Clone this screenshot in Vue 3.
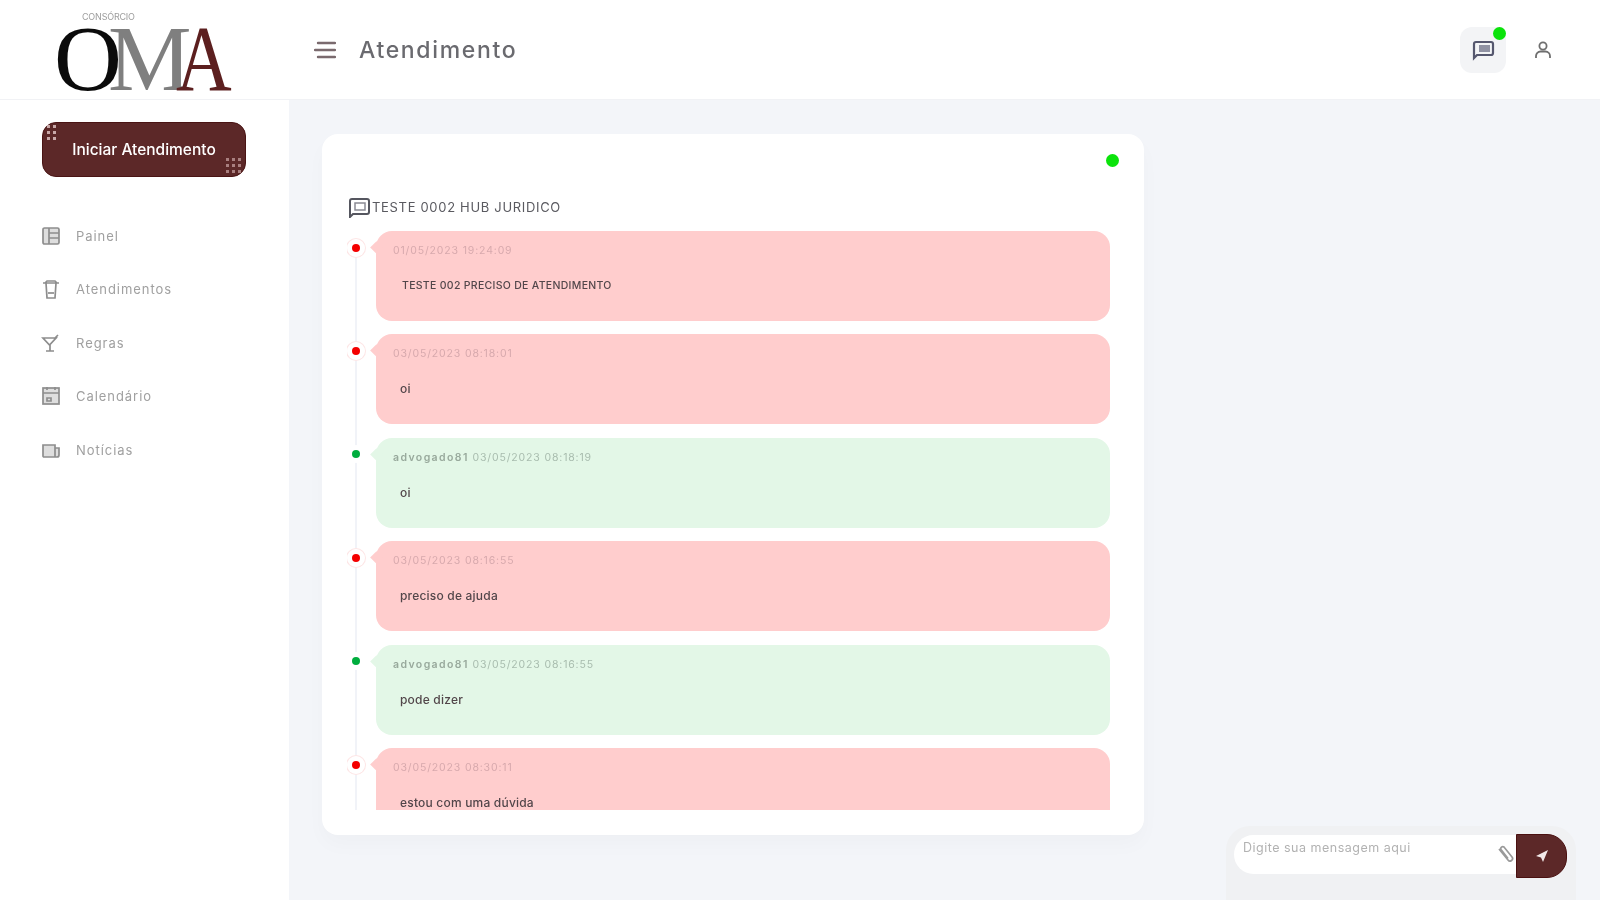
<script setup>
const nav = [
  { label: 'Painel', icon: 'panel' },
  { label: 'Atendimentos', icon: 'cup' },
  { label: 'Regras', icon: 'glass' },
  { label: 'Calendário', icon: 'cal' },
  { label: 'Notícias', icon: 'news' }
]
const messages = [
  { kind: 'in', meta: '01/05/2023 19:24:09', text: 'TESTE 002 PRECISO DE ATENDIMENTO', upper: true },
  { kind: 'in', meta: '03/05/2023 08:18:01', text: 'oi' },
  { kind: 'out', author: 'advogado81', meta: '03/05/2023 08:18:19', text: 'oi' },
  { kind: 'in', meta: '03/05/2023 08:16:55', text: 'preciso de ajuda' },
  { kind: 'out', author: 'advogado81', meta: '03/05/2023 08:16:55', text: 'pode dizer' },
  { kind: 'in', meta: '03/05/2023 08:30:11', text: 'estou com uma dúvida' }
]
</script>

<template>
  <div class="page">
    <header class="topbar">
      <div class="brand">
        <span class="brand-small">CONSÓRCIO</span>
        <span class="brand-mark"><span class="l-o">O</span><span class="l-m">M</span><span class="l-a">A</span></span>
      </div>
      <svg class="burger" width="22" height="20" viewBox="0 0 22 20" fill="none" stroke="#7a6a6e" stroke-width="2.4" stroke-linecap="round">
        <path d="M4 3h17M1 10h20M4 17h17" />
      </svg>
      <h1 class="title">Atendimento</h1>
      <div class="top-actions">
        <div class="chat-btn">
          <svg width="24" height="22" viewBox="0 0 24 22" fill="none">
            <path d="M5 3h15a2 2 0 0 1 2 2v9a2 2 0 0 1-2 2H6l-3 3V5a2 2 0 0 1 2-2z" stroke="#55576e" stroke-width="2.2" />
            <rect x="8" y="6" width="11" height="7" fill="#9092a3" />
          </svg>
          <span class="chat-dot"></span>
        </div>
        <svg class="user" width="20" height="20" viewBox="0 0 20 20" fill="none" stroke="#6f6f6f" stroke-width="1.8">
          <circle cx="10" cy="6" r="3.6" />
          <path d="M3 18v-2a4.5 4.5 0 0 1 4.5-4.5h5A4.5 4.5 0 0 1 17 16v2" />
        </svg>
      </div>
    </header>

    <div class="body">
      <aside class="sidebar">
        <button class="start" type="button">
          <svg class="dots dots-a" width="12" height="18" viewBox="0 0 12 18" fill="#c9a9a9">
            <rect x="0" y="1" width="3" height="3" /><rect x="6" y="1" width="3" height="3" />
            <rect x="0" y="7" width="3" height="3" /><rect x="6" y="7" width="3" height="3" />
            <rect x="0" y="13" width="3" height="3" /><rect x="6" y="13" width="3" height="3" />
          </svg>
          <span>Iniciar Atendimento</span>
          <svg class="dots dots-b" width="18" height="18" viewBox="0 0 18 18" fill="#a98080">
            <rect x="0" y="1" width="3" height="3" /><rect x="6" y="1" width="3" height="3" /><rect x="12" y="1" width="3" height="3" />
            <rect x="0" y="7" width="3" height="3" /><rect x="6" y="7" width="3" height="3" /><rect x="12" y="7" width="3" height="3" />
            <rect x="0" y="13" width="3" height="3" /><rect x="6" y="13" width="3" height="3" /><rect x="12" y="13" width="3" height="3" />
          </svg>
        </button>
        <nav class="nav">
          <a v-for="item in nav" :key="item.label" class="nav-item">
            <svg width="20" height="20" viewBox="0 0 20 20" fill="none" stroke="#8d8d8d" stroke-width="1.7">
              <template v-if="item.icon === 'panel'">
                <rect x="2" y="2" width="16" height="16" rx="1.5" fill="#dedede" />
                <path d="M8 2v16M8 7h10M8 12h10" />
              </template>
              <template v-else-if="item.icon === 'cup'">
                <path d="M2 4h16M4 4l2-2h8l2 2M5 4l1 15h8l1-15" />
                <path d="M7 14h6" />
              </template>
              <template v-else-if="item.icon === 'glass'">
                <path d="M2 5h13l-6.500 7zM9 12v6M5 18h8M13 6l4-4" />
              </template>
              <template v-else-if="item.icon === 'cal'">
                <rect x="2" y="2" width="16" height="16" fill="#dedede" />
                <path d="M2 7h16M6 1v3M14 1v3M6 12h4v3H6z" />
              </template>
              <template v-else>
                <path d="M2 5h12v12H3a1 1 0 0 1-1-1zM14 8h4v7a2 2 0 0 1-2 2h-2" fill="#dedede" />
              </template>
            </svg>
            <span>{{ item.label }}</span>
          </a>
        </nav>
      </aside>

      <main class="main">
        <section class="card">
          <div class="status"><span class="status-dot"></span></div>
          <div class="chat-title">
            <svg width="24" height="22" viewBox="0 0 24 22" fill="none">
              <path d="M5 3h15a2 2 0 0 1 2 2v11a2 2 0 0 1-2 2H6l-3 3V5a2 2 0 0 1 2-2z" stroke="#55565f" stroke-width="2" />
              <rect x="8" y="7" width="10" height="7" stroke="#8a8b94" stroke-width="1.500" />
            </svg>
            <span>TESTE 0002 HUB JURIDICO</span>
          </div>
          <div class="timeline">
            <article v-for="(m, i) in messages" :key="i" class="row" :class="m.kind">
              <span class="marker"><span class="marker-core"></span></span>
              <div class="bubble">
                <div class="meta"><b v-if="m.author">{{ m.author }}</b> {{ m.meta }}</div>
                <p class="text" :class="{ upper: m.upper }">{{ m.text }}</p>
              </div>
            </article>
          </div>
        </section>
      </main>
    </div>

    <div class="composer">
      <div class="field">
        <span class="placeholder">Digite sua mensagem aqui</span>
        <svg class="clip" width="18" height="20" viewBox="0 0 18 20" fill="none" stroke="#9a9a9a" stroke-width="1.700">
          <path d="M3 5l9 11a2.500 2.500 0 0 0 4-3L8 3a2 2 0 0 0-3 2.500l7 9" />
        </svg>
      </div>
      <button class="send" type="button" aria-label="Enviar">
        <svg width="14" height="14" viewBox="0 0 14 14" fill="#f2e9e9"><path d="M13 1L1 7l5 1.500L8 13z" /></svg>
      </button>
    </div>
  </div>
</template>

<style>
html, body { margin: 0; background: #f3f5f9; overflow: hidden; }
</style>

<style scoped>
.page {
  position: relative;
  width: 1600px;
  height: 900px;
  overflow: hidden;
  display: flex;
  flex-direction: column;
  background: #f3f5f9;
  font-family: Inter, "Noto Sans", sans-serif;
  filter: blur(0.75px);
}
.topbar {
  height: 100px;
  flex: none;
  display: flex;
  align-items: center;
  background: #fff;
  border-bottom: 1px solid #f1f2f5;
  box-sizing: border-box;
}
.brand {
  width: 314px;
  flex: none;
  height: 99px;
  display: flex;
  flex-direction: column;
  padding: 10px 0 0 54px;
  box-sizing: border-box;
}
.brand-small {
  font-size: 9px;
  line-height: 13px;
  color: #9c9c9c;
  margin-left: 28px;
  letter-spacing: -0.2px;
}
.brand-mark {
  display: block;
  font-family: "Liberation Serif", serif;
  font-size: 94px;
  line-height: 70px;
  height: 70px;
  white-space: nowrap;
}
.l-o { color: #0b0b0b; }
.l-m { color: #7f7f7f; margin-left: -14px; }
.l-a { color: #5c1f1f; margin-left: -15px; display: inline-block; transform: scaleX(0.82); transform-origin: left; }
.burger { flex: none; }
.title {
  margin: 0 0 0 23px;
  font-size: 23px;
  font-weight: 500;
  color: #6a6a6f;
  letter-spacing: 1.65px;
}
.top-actions {
  margin-left: auto;
  display: flex;
  align-items: center;
  gap: 27px;
  padding-right: 47px;
}
.chat-btn {
  position: relative;
  width: 46px;
  height: 46px;
  border-radius: 12px;
  background: #f3f4f6;
  display: flex;
  align-items: center;
  justify-content: center;
}
.chat-dot {
  position: absolute;
  top: 0;
  right: 0;
  width: 13px;
  height: 13px;
  border-radius: 50%;
  background: #0be30b;
}
.body { flex: 1; display: flex; min-height: 0; }
.sidebar {
  width: 289px;
  flex: none;
  background: #fff;
  padding: 22px 42px 0;
  box-sizing: border-box;
}
.start {
  position: relative;
  width: 204px;
  height: 55px;
  padding: 0;
  border: 1px solid #4a1414;
  border-radius: 14px;
  background: #5c2828;
  color: #fff;
  font: 500 15.500px Inter, "Noto Sans", sans-serif;
  letter-spacing: 0;
}
.dots { position: absolute; }
.dots-a { top: 1px; left: 4px; }
.dots-b { bottom: 1px; right: 1px; }
.nav { display: flex; flex-direction: column; gap: 33.4px; margin-top: 49px; }
.nav-item {
  display: flex;
  align-items: center;
  gap: 15px;
  height: 20px;
  margin-left: -1px;
  color: #a0a0a0;
  font-size: 13px;
  letter-spacing: 0.95px;
}
.main { flex: 1; padding: 34px 0 0 33px; }
.card {
  width: 822px;
  height: 701px;
  box-sizing: border-box;
  padding: 20px 34px 25px 25px;
  background: #fff;
  border-radius: 16px;
  box-shadow: 0 10px 20px rgba(20, 30, 60, 0.025);
  display: flex;
  flex-direction: column;
}
.status { display: flex; justify-content: flex-end; height: 14px; }
.status-dot { width: 13px; height: 13px; border-radius: 50%; background: #0be30b; margin-right: -9px; }
.chat-title {
  display: flex;
  align-items: center;
  gap: 1px;
  margin-top: 27px;
  height: 24px;
  font-size: 13px;
  letter-spacing: 0.68px;
  color: #5a5a60;
}
.timeline {
  flex: 1;
  min-height: 0;
  margin-top: 12px;
  overflow: hidden;
  display: flex;
  flex-direction: column;
  gap: 13.4px;
  position: relative;
}
.timeline::before {
  content: "";
  position: absolute;
  left: 8px;
  top: 10px;
  bottom: 0;
  width: 2px;
  background: #f1f3f8;
}
.row { position: relative; flex: none; padding-left: 28px; }
.marker {
  position: absolute;
  left: 0;
  top: 8px;
  width: 18px;
  height: 18px;
  border-radius: 50%;
  background: #fff;
  box-shadow: 0 0 0 1px #fde6e6;
  display: flex;
  align-items: center;
  justify-content: center;
}
.marker-core { width: 8px; height: 8px; border-radius: 50%; background: #f40000; }
.out .marker { box-shadow: none; top: 7px; }
.out .marker-core { background: #00ad3e; }
.bubble {
  position: relative;
  height: 90px;
  margin-left: 1px;
  border-radius: 16px;
  box-sizing: border-box;
  padding: 13px 17px 0;
  background: #ffcdcd;
}
.bubble::before {
  content: "";
  position: absolute;
  left: -4px;
  top: 12px;
  width: 9px;
  height: 9px;
  background: inherit;
  transform: rotate(45deg);
}
.out .bubble { background: #e3f7e7; }
.meta { font-size: 10.500px; line-height: 14px; color: #d7a9ad; letter-spacing: 0.85px; }
.out .meta { color: #a8bcae; }
.meta b { font-weight: 600; color: #98a99c; letter-spacing: 1.4px; }
.text {
  margin: 20px 0 0 7px;
  font-size: 12px;
  line-height: 16px;
  color: #52464a;
  font-weight: 500;
  letter-spacing: 0.2px;
}
.text.upper { font-size: 10.5px; margin-left: 9px; letter-spacing: 0.3px; }
.composer {
  position: absolute;
  right: 24px;
  bottom: 0;
  width: 350px;
  height: 74px;
  box-sizing: border-box;
  padding: 9px 9px 0 8px;
  border-radius: 24px 24px 0 0;
  background: #f0f1f3;
  display: flex;
  align-items: flex-start;
}
.field {
  position: relative;
  flex: 1;
  height: 39px;
  border-radius: 20px 0 0 20px;
  background: #fff;
  padding: 5px 0 0 9px;
  box-sizing: border-box;
  font-size: 12.5px;
  line-height: 16px;
  letter-spacing: 0.5px;
  color: #b2b2b2;
}
.clip { position: absolute; right: 2px; top: 9px; }
.send {
  width: 51px;
  height: 44px;
  padding: 0;
  margin-top: -1px;
  border: 1px solid #4a1010;
  border-radius: 0 20px 20px 0;
  background: #5c2828;
  display: flex;
  align-items: center;
  justify-content: center;
}
</style>
